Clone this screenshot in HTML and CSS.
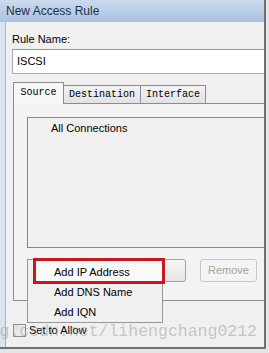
FILE: index.html
```html
<!DOCTYPE html>
<html>
<head>
<meta charset="utf-8">
<link rel="stylesheet" href="styles.css">
</head>
<body>
<div class="window">
  <div class="titlebar">New Access Rule</div>
  <div class="body">
    <div class="label">Rule Name:</div>
    <div class="input">ISCSI</div>
    <div class="tabctl">
      <div class="tabrow">
        <div class="tab sel">Source</div>
        <div class="tab">Destination</div>
        <div class="tab">Interface</div>
      </div>
      <div class="panel">
        <div class="listbox"><div class="item">All Connections</div></div>
        <div class="btnrow">
          <div class="btn add">Add</div>
          <div class="btn dis">Remove</div>
        </div>
      </div>
    </div>
    <div class="checkrow">
      <span class="checkbox"></span>
      <span class="checklabel">Set to Allow</span>
    </div>
  </div>
</div>
<div class="menu">
  <div class="mitem hl"><span>Add IP Address</span></div>
  <div class="mitem"><span>Add DNS Name</span></div>
  <div class="mitem"><span>Add IQN</span></div>
</div>
<div class="watermark">blog.csdn.net/lihengchang0212</div>
</body>
</html>
```
FILE: styles.css
```css
html, body {
  margin: 0;
  padding: 0;
}
body {
  width: 269px;
  height: 353px;
  background: #e4e4e4;
  overflow: hidden;
  position: relative;
  font-family: "Liberation Sans", Arial, sans-serif;
  font-size: 11px;
  color: #000;
}
.window {
  width: 266px;
  height: 349px;
  box-sizing: border-box;
  border-right: 2px solid #6f6f6f;
  border-bottom: 2px solid #6f6f6f;
  background: #d9e4f1;
  display: flex;
  flex-direction: column;
  overflow: hidden;
}
.titlebar {
  flex: none;
  height: 22px;
  line-height: 22px;
  padding-left: 6px;
  font-size: 12px;
  color: #1e3048;
  background: linear-gradient(#cbdaee, #a9c2e1);
}
.body {
  flex: 1;
  margin-left: 5px;
  border-left: 1px solid #aab4c0;
  background: #f0f0f0;
  padding-left: 6px;
}
.label {
  margin-top: 10px;
  line-height: 14px;
}
.input {
  margin-top: 3px;
  width: 270px;
  height: 25px;
  box-sizing: border-box;
  border: 1px solid #a5acb5;
  border-top-color: #8e969f;
  background: #fff;
  line-height: 23px;
  padding-left: 4px;
}
.tabctl {
  margin-top: 8px;
  margin-left: 1px;
}
.tabrow {
  display: flex;
  align-items: flex-end;
  height: 21px;
  position: relative;
  z-index: 1;
}
.tab {
  box-sizing: border-box;
  height: 18px;
  border: 1px solid #898c95;
  border-bottom: none;
  margin-left: -1px;
  background: linear-gradient(#f3f3f3, #e2e2e2);
  font-family: "Liberation Mono", "Courier New", monospace;
  font-size: 10px;
  line-height: 17px;
  text-align: center;
  padding: 0 4px;
}
.tab:nth-child(2) { width: 78px; }
.tab:nth-child(3) { width: 66px; }
.tab.sel {
  margin-left: 0;
  width: 51px;
  height: 22px;
  margin-bottom: -1px;
  background: #f7f7f7;
  line-height: 19px;
}
.panel {
  width: 270px;
  height: 198px;
  box-sizing: border-box;
  border: 1px solid #898c95;
  background: #f3f3f3;
  padding: 13px 0 0 13px;
}
.listbox {
  height: 131px;
  box-sizing: border-box;
  border: 1px solid #828790;
  background: #f0f0f0;
  padding: 3px 0 0 23px;
}
.item {
  line-height: 14px;
}
.btnrow {
  display: flex;
  gap: 14px;
  margin-top: 11px;
}
.btn {
  box-sizing: border-box;
  height: 23px;
  border: 1px solid #a3a3a3;
  border-radius: 3px;
  background: linear-gradient(#f6f6f6, #e6e6e6);
  line-height: 21px;
  text-align: center;
}
.btn.add { width: 159px; }
.btn.dis {
  width: 57px;
  border-color: #c6c6c6;
  background: #f4f4f4;
  color: #a3a3a3;
}
.checkrow {
  display: flex;
  align-items: center;
  gap: 3px;
  margin-top: 22px;
  margin-left: 1px;
}
.checkbox {
  width: 13px;
  height: 13px;
  box-sizing: border-box;
  border: 1px solid #8f8f8f;
  background: linear-gradient(135deg, #dcdcdc, #f6f6f6);
  box-shadow: inset 0 0 0 1px #e8e8e8;
}
.checklabel {
  line-height: 14px;
}
.menu {
  position: absolute;
  left: 27px;
  top: 259px;
  width: 136px;
  height: 64px;
  box-sizing: border-box;
  border: 1px solid #979797;
  background: #f0f0f0;
  padding-top: 2px;
  z-index: 5;
}
.mitem {
  height: 20px;
  line-height: 20px;
  padding-left: 26px;
  position: relative;
}
.mitem span {
  position: relative;
  z-index: 1;
}
.mitem.hl::before {
  content: "";
  position: absolute;
  left: 5px;
  top: -4px;
  width: 132px;
  height: 26px;
  box-sizing: border-box;
  border: 3px solid #c9171e;
  background: #fafafa;
  z-index: 0;
}
.watermark {
  position: absolute;
  right: 12px;
  top: 322px;
  white-space: nowrap;
  font-family: "Liberation Mono", "Courier New", monospace;
  font-size: 16.5px;
  line-height: 20px;
  color: rgba(140, 140, 140, 0.45);
  z-index: 6;
}
```
